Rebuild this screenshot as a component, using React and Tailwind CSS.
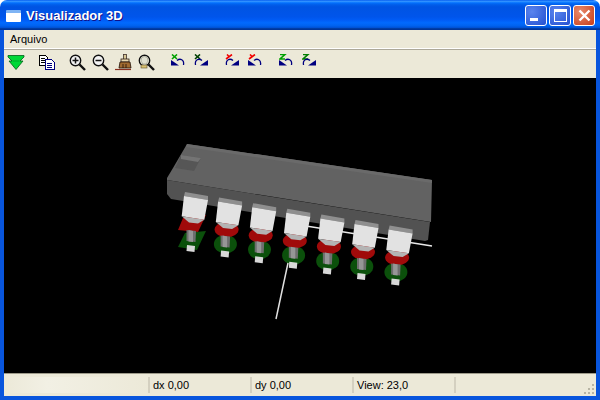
import React from "react";

const UI = { fontFamily: '"Liberation Sans", Arial, sans-serif' };

function GreenArrow() {
  return (
    <svg width="18" height="15" viewBox="0 0 18 15">
      <polygon points="1,0.500 17,0.500 17,2 13,6 16,6 9,14.500 2,6 5,6 1,2" fill="#00d838" stroke="#006018" strokeWidth="0.800" />
      <line x1="5.500" y1="6" x2="12.500" y2="6" stroke="#00a028" strokeWidth="0.800" />
    </svg>
  );
}

function CopyIcon() {
  return (
    <svg width="16" height="15" viewBox="0 0 16 15" shapeRendering="crispEdges">
      <path d="M0.500 0.500h6l2 2v8h-8z" fill="#fff" stroke="#000" />
      <path d="M2 3h4M2 5h4M2 7h4" stroke="#000" />
      <path d="M6.500 4.500h6l2.500 2.500v7h-8.500z" fill="#fff" stroke="#000080" />
      <path d="M8 8h5M8 10h5M8 12h5" stroke="#000080" />
    </svg>
  );
}

function Magnifier({ children }) {
  return (
    <svg width="17" height="17" viewBox="0 0 17 17">
      <circle cx="6.500" cy="6.500" r="5.200" fill="#f4f4f4" stroke="#111" strokeWidth="1.400" />
      <line x1="10.500" y1="10.500" x2="16" y2="16" stroke="#111" strokeWidth="2.400" />
      {children}
    </svg>
  );
}

function BrushIcon() {
  return (
    <svg width="18" height="17" viewBox="0 0 18 17">
      <rect x="8.500" y="0.500" width="3" height="5" fill="#d8c898" stroke="#40302a" strokeWidth="0.800" />
      <rect x="6" y="5" width="8" height="3" fill="#e8d8b0" stroke="#302018" strokeWidth="0.800" />
      <polygon points="5,8 15,8 16,14 4,14" fill="#a06a30" stroke="#201008" strokeWidth="0.800" />
      <path d="M8 10v4M11 10v4" stroke="#201008" strokeWidth="0.800" />
      <path d="M0 15.500h16" stroke="#8a3020" strokeWidth="1.200" />
    </svg>
  );
}

function BulbMagnifier() {
  return (
    <svg width="17" height="17" viewBox="0 0 17 17">
      <circle cx="6.500" cy="6.500" r="5.200" fill="#f8f8e8" stroke="#111" strokeWidth="1.400" />
      <path d="M3 6a3.500 3.500 0 0 1 7 0c0 2-1.500 2.500-1.500 4h-4c0-1.500-1.500-2-1.500-4z" fill="#e0e0d0" stroke="#a0a090" strokeWidth="0.800" />
      <rect x="3" y="11" width="6" height="3" fill="#d8c070" stroke="#605030" strokeWidth="0.600" />
      <line x1="10.500" y1="10.500" x2="16" y2="16" stroke="#111" strokeWidth="2.400" />
    </svg>
  );
}

function RotIcon({ letter, color, mirror }) {
  const marks = {
    x: "M1 0.500l5 4.500M6 0.500l-5 4.500",
    y: "M2 0.500l2.500 2.500M7 0.500l-6 4.500",
    z: "M1 0.500h5l-5 4.500h5",
  };
  return (
    <svg width="14" height="12" viewBox="0 0 14 12" className="-mt-[4px]">
      <path d={marks[letter]} stroke={color} strokeWidth="1.600" fill="none" />
      <g transform={mirror ? "translate(14 0) scale(-1 1)" : undefined}>
        <polygon points="0,11.500 8,11.500 0,6" fill="#000080" />
        <path d="M6 6.500C9 4 13.500 5.500 12.500 11" stroke="#000080" strokeWidth="1.300" fill="none" />
      </g>
    </svg>
  );
}

function Btn({ children }) {
  return <div className="w-[23px] h-[24px] flex items-center justify-center shrink-0">{children}</div>;
}

function Pin({ x, y, first }) {
  return (
    <g transform={`translate(${x} ${y})`}>
      {first ? (
        <polygon points="0,41 21,39 12,58 -7,55" fill="#0b500b" />
      ) : (
        <ellipse cx="6.300" cy="46.500" rx="11.500" ry="9.500" fill="#0b500b" />
      )}
      <polygon points="2,53 10,54 9.500,60 1.500,59" fill="#d8d8d8" />
      {first ? (
        <polygon points="-2,26 21,23 13,40 -7,38" fill="#a00a0a" />
      ) : (
        <ellipse cx="7.500" cy="32" rx="12" ry="7.500" fill="#a00a0a" />
      )}
      <polygon points="1.500,38 11,39 10.500,50 1.500,49" fill="#6e6e6e" />
      <polygon points="3.500,38 8,39 8,50 3.500,49.500" fill="#969696" />
      <polygon points="0,0 23,4 23,8 -1,4" fill="#8f8f8f" />
      <polygon points="-1,4 23,8 19.300,27.700 -3.300,24.300" fill="#e2e2e2" />
      <polygon points="-3.300,24.300 19.300,27.700 13,31.500 4,30.500" fill="#b4b4b4" />
    </g>
  );
}

function Chip() {
  const pins = [0, 1, 2, 3, 4, 5, 6];
  return (
    <svg className="block w-full h-full" viewBox="4 78 592 295">
      <line x1="306" y1="226" x2="432" y2="246" stroke="#e8e8e8" strokeWidth="1.500" />
      <polygon points="167,180 430,222 428,240 425,241 171,199 167,194" fill="#525252" />
      <polygon points="187,144 432,180 431,222 167,180 167,178 173,168" fill="#626262" />
      <polygon points="187,144 432,180 432,183 186,147" fill="#6a6a6a" />
      <polygon points="181,155 201,158 194,171 175,168" fill="#565656" />
      <polygon points="181,155 201,158 198,162 181,159" fill="#747474" />
      {pins.map((i) => (
        <Pin key={i} x={185 + i * 34.100} y={192 + i * 5.600} first={i === 0} />
      ))}
      <line x1="288" y1="263" x2="276" y2="319" stroke="#e0e0e0" strokeWidth="1.500" />
    </svg>
  );
}

export default function App() {
  const rot = [
    [["x", "#00a000", false], ["x", "#004000", true]],
    [["y", "#f00000", true], ["y", "#f00000", false]],
    [["z", "#00a000", false], ["z", "#008000", true]],
  ];
  return (
    <div className="w-[600px] h-[400px] flex flex-col overflow-hidden bg-white" style={UI}>
      <div className="h-[30px] shrink-0 rounded-t-[7px] flex items-center pl-[6px] pr-[5px] bg-[linear-gradient(to_bottom,#0058ee_0%,#3593ff_4%,#288eff_6%,#127dff_8%,#036ffc_10%,#0262ee_14%,#0057e5_20%,#0054e3_24%,#0055eb_56%,#005bf5_66%,#026afe_76%,#0062ef_86%,#0052d6_92%,#0040ab_94%,#003092_100%)]">
        <div className="w-[15px] h-[12px] bg-white border-t-[3px] border-[#7fb4f4] rounded-[1px] mr-[5px] mt-[2px]" />
        <span className="text-white font-bold text-[13px] [text-shadow:1px_1px_#0f1089] flex-1 leading-none">Visualizador 3D</span>
        <div className="flex gap-[2px]">
          <div className="w-[22px] h-[21px] rounded-[3px] border border-white bg-[radial-gradient(circle_at_30%_30%,#5a84ee,#2450d0)] flex items-end pb-[4px] pl-[4px]">
            <div className="w-[8px] h-[3px] bg-white" />
          </div>
          <div className="w-[22px] h-[21px] rounded-[3px] border border-white bg-[radial-gradient(circle_at_30%_30%,#5a84ee,#2450d0)] flex items-center justify-center">
            <div className="w-[13px] h-[13px] border border-white border-t-[3px]" />
          </div>
          <div className="w-[22px] h-[21px] rounded-[3px] border border-white bg-[radial-gradient(circle_at_30%_30%,#e88a6c,#c83c18)] flex items-center justify-center">
            <svg width="13" height="13" viewBox="0 0 13 13">
              <path d="M1.500 1.500l10 10M11.500 1.500l-10 10" stroke="#fff" strokeWidth="2.400" />
            </svg>
          </div>
        </div>
      </div>
      <div className="flex-1 min-h-0 flex flex-col px-[4px] pb-[4px] bg-[#0855dd]">
        <div className="h-[19px] shrink-0 bg-[#ece9d8] border-b border-white flex items-center pl-[6px] text-[11px] text-black">
          Arquivo
        </div>
        <div className="h-[29px] shrink-0 bg-[#ece9d8] border-t border-[#aca899] flex items-start">
          <Btn><GreenArrow /></Btn>
          <div className="w-[8px] shrink-0" />
          <Btn><CopyIcon /></Btn>
          <div className="w-[8px] shrink-0" />
          <Btn>
            <Magnifier>
              <path d="M3.500 6.500h6M6.500 3.500v6" stroke="#111" strokeWidth="1.500" />
            </Magnifier>
          </Btn>
          <Btn>
            <Magnifier>
              <path d="M3.500 6.500h6" stroke="#111" strokeWidth="1.500" />
            </Magnifier>
          </Btn>
          <Btn><BrushIcon /></Btn>
          <Btn><BulbMagnifier /></Btn>
          {rot.map((group, gi) => (
            <React.Fragment key={gi}>
              <div className="w-[8px] shrink-0" />
              {group.map(([l, c, m], i) => (
                <Btn key={i}><RotIcon letter={l} color={c} mirror={m} /></Btn>
              ))}
            </React.Fragment>
          ))}
        </div>
        <div className="flex-1 min-h-0 bg-black">
          <Chip />
        </div>
        <div className="h-[23px] shrink-0 bg-[#ece9d8] border-t border-[#9d9a8a] flex text-[11px] text-black relative">
          <div className="w-[144px] my-[3px] bg-[linear-gradient(to_right,#ece9d8,#f2f0e4_30%,#ece9d8)]" />
          <div className="w-[102px] my-[3px] border-l-2 border-[#d4d0c0] pl-[3px] flex items-center">dx 0,00</div>
          <div className="w-[102px] my-[3px] border-l-2 border-[#d4d0c0] pl-[3px] flex items-center">dy 0,00</div>
          <div className="w-[102px] my-[3px] border-l-2 border-[#d4d0c0] pl-[3px] flex items-center">View: 23,0</div>
          <div className="flex-1 my-[3px] border-l-2 border-[#d4d0c0]" />
          <svg className="absolute right-[1px] bottom-[1px]" width="11" height="11" viewBox="0 0 11 11" shapeRendering="crispEdges">
            <path d="M8 0h2v2H8zM4 4h2v2H4zM8 4h2v2H8zM0 8h2v2H0zM4 8h2v2H4zM8 8h2v2H8z" fill="#b8b5a4" />
          </svg>
        </div>
      </div>
    </div>
  );
}
